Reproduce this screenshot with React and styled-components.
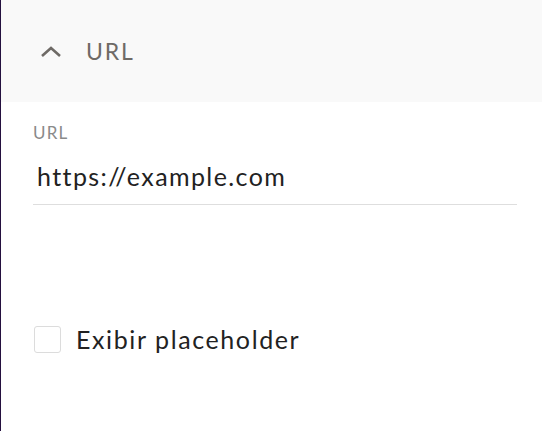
import React from "react";
import styled, { createGlobalStyle } from "styled-components";

const Global = createGlobalStyle`
  html, body { margin: 0; padding: 0; background: #fff; }
  body { font-family: Lato, "Open Sans", sans-serif; }
`;

const Panel = styled.div`
  width: 542px;
  height: 431px;
  box-sizing: border-box;
  border-left: 1px solid #24103f;
  background: #fff;
  display: flex;
  flex-direction: column;
`;

const Header = styled.div`
  height: 102px;
  background: #f9f9f9;
  display: flex;
  align-items: center;
  padding-left: 39px;
  gap: 24px;
`;

const Title = styled.span`
  font-size: 23px;
  letter-spacing: 1.8px;
  color: #6e6a66;
`;

const Body = styled.div`
  padding: 20px 25px 0 32px;
  display: flex;
  flex-direction: column;
`;

const FieldLabel = styled.label`
  font-size: 17px;
  letter-spacing: 1.2px;
  color: #8a8a8a;
  line-height: 22px;
`;

const Input = styled.input`
  border: none;
  outline: none;
  border-bottom: 1px solid #dedede;
  font-family: Lato, "Open Sans", sans-serif;
  font-size: 25px;
  letter-spacing: 1.4px;
  color: #222;
  padding: 17px 0 13px 4px;
  background: transparent;
  width: 100%;
  box-sizing: border-box;
`;

const CheckRow = styled.label`
  display: flex;
  align-items: center;
  gap: 15px;
  margin-top: 119px;
  margin-left: 1px;
`;

const Box = styled.span`
  width: 27px;
  height: 27px;
  box-sizing: border-box;
  border: 1px solid #dcdcdc;
  border-radius: 3px;
  background: #fff;
`;

const CheckText = styled.span`
  font-size: 25px;
  letter-spacing: 1.6px;
  color: #222;
`;

export default function App() {
  return (
    <>
      <Global />
      <Panel>
        <Header>
          <svg width="22" height="14" viewBox="0 0 22 14">
            <path d="M2 12 L11 4 L20 12" fill="none" stroke="#6e6a66" strokeWidth="2.6" />
          </svg>
          <Title>URL</Title>
        </Header>
        <Body>
          <FieldLabel>URL</FieldLabel>
          <Input defaultValue="https://example.com" />
          <CheckRow>
            <Box />
            <CheckText>Exibir placeholder</CheckText>
          </CheckRow>
        </Body>
      </Panel>
    </>
  );
}
